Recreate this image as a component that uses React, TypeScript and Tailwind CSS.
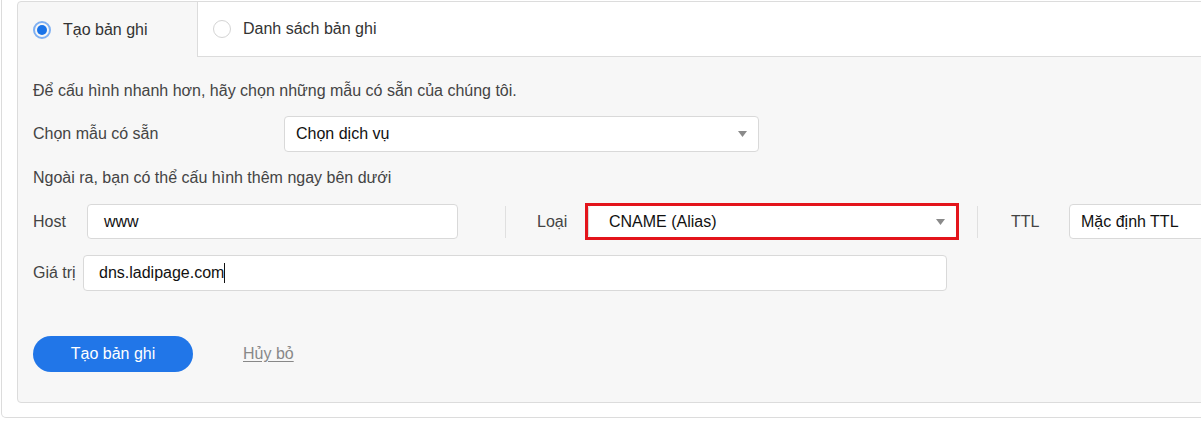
import React from "react";

function Caret() {
  return (
    <svg width="9" height="6" viewBox="0 0 9 6" className="shrink-0">
      <path d="M0 0 L9 0 L4.5 6 Z" fill="#8a8a8a" />
    </svg>
  );
}

export default function App() {
  return (
    <div
      className="w-[1201px] h-[423px] overflow-hidden bg-white text-[#333]"
      style={{ fontFamily: '"Liberation Sans", Arial, sans-serif' }}
    >
      <div className="ml-[1px] w-[1260px] h-[418px] border-l border-r border-b border-[#dcdcdc] rounded-b-[5px] pl-[15px] pt-[1px]">
        <div className="h-[402px] border border-[#dcdcdc] rounded-[4px] bg-[#f7f7f7] flex flex-col overflow-hidden">
          {/* Tabs */}
          <div className="flex h-[55px] shrink-0">
            <div className="w-[179px] shrink-0 flex items-center pl-[15px] gap-[12px]">
              <span className="w-[18px] h-[18px] rounded-full border-[2px] border-[#7fb0f2] flex items-center justify-center">
                <span className="w-[10px] h-[10px] rounded-full bg-[#1a73e8]" />
              </span>
              <span className="text-[16px] text-[#333]">Tạo bản ghi</span>
            </div>
            <div className="flex-1 bg-white border-l border-b border-[#dcdcdc] flex items-center pl-[15px] gap-[12px]">
              <span className="w-[18px] h-[18px] rounded-full border border-[#d4d4d4] bg-white" />
              <span className="text-[16px] text-[#333]">Danh sách bản ghi</span>
            </div>
          </div>

          {/* Content */}
          <div className="pl-[15px] flex flex-col text-[16px] text-[#444]">
            <div className="mt-[24px] h-[20px] leading-[20px] whitespace-nowrap">
              Để cấu hình nhanh hơn, hãy chọn những mẫu có sẵn của chúng tôi.
            </div>

            <div className="mt-[15px] flex items-center h-[36px]">
              <div className="w-[251px] shrink-0">Chọn mẫu có sẵn</div>
              <div className="w-[475px] shrink-0 h-[36px] bg-white border border-[#d9d9d9] rounded-[4px] flex items-center justify-between pl-[11px] pr-[11px] text-[#111]">
                <span>Chọn dịch vụ</span>
                <Caret />
              </div>
            </div>

            <div className="mt-[16px] h-[20px] leading-[20px] whitespace-nowrap">
              Ngoài ra, bạn có thể cấu hình thêm ngay bên dưới
            </div>

            <div className="mt-[15px] flex items-center h-[37px]">
              <div className="w-[54px] shrink-0">Host</div>
              <div className="w-[371px] shrink-0 h-[35px] bg-white border border-[#d9d9d9] rounded-[4px] flex items-center pl-[16px] text-[#111]">
                www
              </div>
              <div className="ml-[47px] shrink-0 w-px h-[32px] bg-[#e0e0e0]" />
              <div className="ml-[31px] w-[48px] shrink-0">Loại</div>
              <div className="w-[374px] shrink-0 h-[37px] border-[3px] border-[#e3141b] flex">
                <div className="flex-1 bg-white border-l border-[#d9d9d9] rounded-[3px] flex items-center justify-between pl-[20px] pr-[11px] text-[#111]">
                  <span>CNAME (Alias)</span>
                  <Caret />
                </div>
              </div>
              <div className="ml-[18px] shrink-0 w-px h-[32px] bg-[#e0e0e0]" />
              <div className="ml-[33px] w-[58px] shrink-0">TTL</div>
              <div className="w-[200px] shrink-0 h-[35px] bg-white border border-[#d9d9d9] rounded-[4px] flex items-center pl-[11px] text-[#111]">
                Mặc định TTL
              </div>
            </div>

            <div className="mt-[15px] flex items-center h-[36px]">
              <div className="w-[50px] shrink-0">Giá trị</div>
              <div className="w-[864px] shrink-0 h-[36px] bg-white border border-[#d9d9d9] rounded-[4px] flex items-center pl-[15px] text-[#111]">
                <span>dns.ladipage.com</span>
                <span className="w-px h-[20px] bg-[#111]" />
              </div>
            </div>

            <div className="mt-[45px] flex items-center h-[36px]">
              <button className="w-[160px] shrink-0 h-[36px] rounded-full bg-[#2176e8] text-white text-[16px]">
                Tạo bản ghi
              </button>
              <span className="ml-[50px] text-[#888] underline underline-offset-2">Hủy bỏ</span>
            </div>
          </div>
        </div>
      </div>
    </div>
  );
}
